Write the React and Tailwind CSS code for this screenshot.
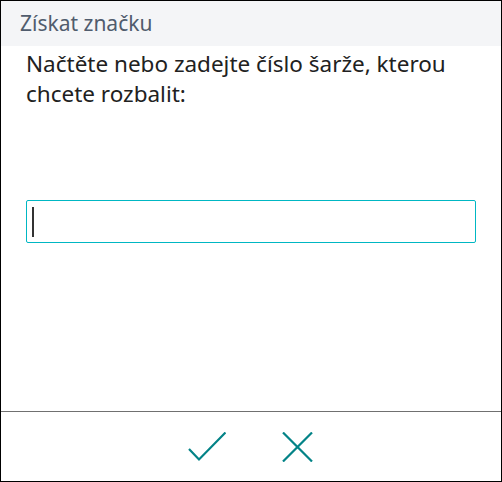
export default function App() {
  return (
    <div
      className="w-[502px] h-[482px] border border-black bg-white flex flex-col"
      style={{ fontFamily: '"Noto Sans", "Open Sans", sans-serif' }}
    >
      <div className="h-[45px] bg-[#f4f5f7] flex items-center px-[19px]">
        <span className="text-[21px] text-[#505c6d]">Získat značku</span>
      </div>

      <div className="flex-1 flex flex-col px-[25px]">
        <p className="mt-[3px] text-[22.5px] leading-[30px] text-[#212121]">
          Načtěte nebo zadejte číslo šarže, kterou chcete rozbalit:
        </p>
        <div className="mt-[91px] h-[43px] w-[450px] border border-[#00b7c3] rounded-[2px] flex items-center pl-[5px]">
          <div className="w-[2px] h-[30px] bg-[#333]" />
        </div>
      </div>

      <div className="h-[70px] border-t border-[#707070] flex items-center justify-center gap-[56px] pr-[2px]">
        <button className="w-[38px] h-[30px] flex items-center justify-center">
          <svg width="38" height="30" viewBox="0 0 38 30" fill="none">
            <path d="M1 17 L11 27.5 L37.5 0.5" stroke="#038387" strokeWidth="2.2" />
          </svg>
        </button>
        <button className="w-[31px] h-[30px] flex items-center justify-center">
          <svg width="31" height="30" viewBox="0 0 31 30" fill="none">
            <path d="M1 0.5 L30 29.5 M30 0.5 L1 29.5" stroke="#038387" strokeWidth="2.2" />
          </svg>
        </button>
      </div>
    </div>
  );
}
